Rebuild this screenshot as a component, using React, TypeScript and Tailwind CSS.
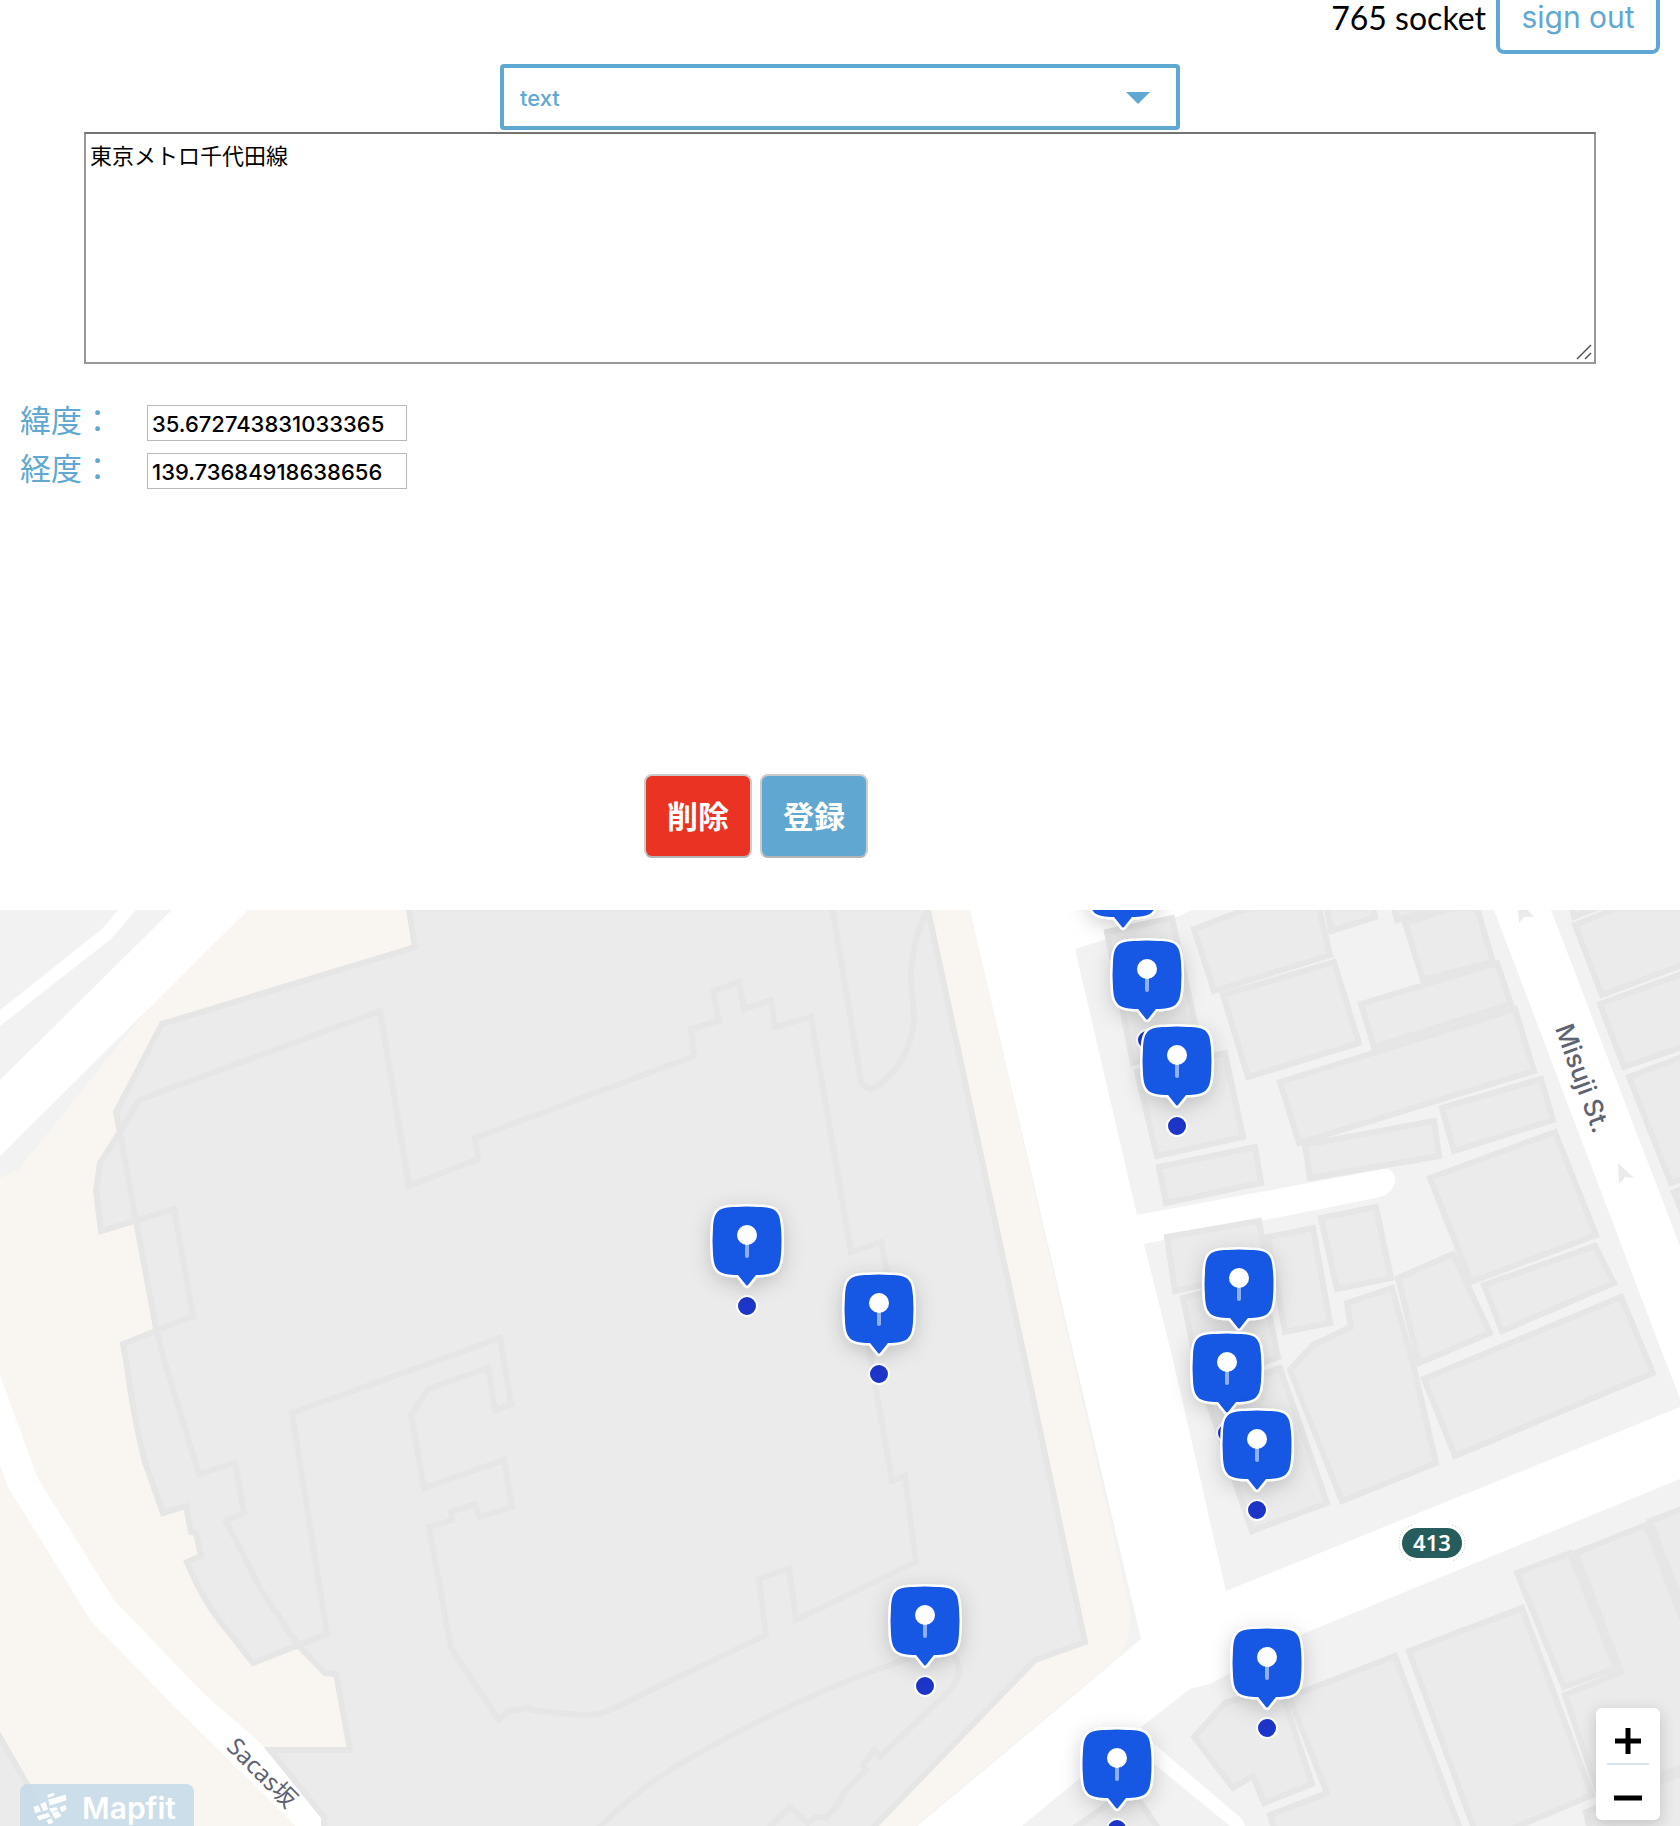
import { useState } from "react";

type Pin = { x: number; y: number; dot: boolean };

const PINS: Pin[] = [
  { x: 1123, y: 948, dot: false },
  { x: 1147, y: 1040, dot: true },
  { x: 1177, y: 1126, dot: true },
  { x: 747, y: 1306, dot: true },
  { x: 1239, y: 1349, dot: false },
  { x: 879, y: 1374, dot: true },
  { x: 1227, y: 1433, dot: true },
  { x: 1257, y: 1510, dot: true },
  { x: 925, y: 1686, dot: true },
  { x: 1267, y: 1728, dot: true },
  { x: 1117, y: 1829, dot: true },
];

const BUILDINGS: string[] = [
  "1107,932 1172,918 1199,1042 1133,1063",
  "1137,1072 1225,1053 1243,1137 1157,1156",
  "1159,1167 1255,1147 1261,1183 1166,1203",
  "1194,929 1250,908 1319,908 1330,955 1214,991",
  "1223,995 1334,962 1359,1043 1248,1077",
  "1326,904 1331,931 1375,917 1372,904",
  "1393,904 1397,920 1450,904",
  "1405,923 1454,908 1477,908 1493,962 1423,980",
  "1361,1004 1497,963 1511,1004 1374,1047",
  "1280,1082 1515,1009 1534,1071 1299,1143",
  "1442,1108 1541,1079 1553,1120 1454,1151",
  "1305,1145 1434,1121 1439,1156 1310,1178",
  "1430,1178 1555,1132 1596,1235 1471,1282",
  "1484,1285 1595,1246 1614,1283 1502,1331",
  "1321,1218 1376,1207 1391,1278 1337,1289",
  "1398,1278 1453,1254 1490,1333 1419,1363",
  "1167,1237 1259,1221 1268,1270 1175,1291",
  "1268,1237 1313,1228 1330,1323 1285,1332",
  "1183,1298 1262,1278 1278,1357 1201,1386",
  "1206,1396 1280,1368 1327,1503 1252,1531",
  "1347,1303 1392,1288 1412,1360 1436,1463 1342,1501 1290,1370 1313,1345 1351,1327",
  "1424,1379 1621,1297 1653,1373 1455,1456",
  "1571,904 1574,917 1606,904",
  "1575,925 1622,906 1690,904 1690,962 1602,995",
  "1600,1004 1690,971 1690,1044 1624,1067",
  "1629,1077 1690,1054 1690,1176 1671,1183",
  "1674,1192 1690,1186 1690,1232",
  "1517,1573 1570,1553 1616,1668 1564,1687",
  "1576,1553 1646,1525 1690,1640 1690,1764 1600,1798 1565,1695 1621,1672",
  "1650,1521 1690,1506 1690,1626",
  "1409,1651 1522,1608 1592,1795 1500,1834 1476,1834",
  "1289,1697 1395,1656 1462,1834 1276,1834 1270,1815 1327,1793",
  "1194,1737 1226,1702 1281,1690 1312,1784 1264,1803 1253,1776 1233,1788",
  "1586,1812 1690,1770 1690,1840 1592,1840",
  "1066,1834 1111,1802 1139,1800 1162,1834",
];

const TOWER_OUTLINES: string[] = [
  "M409 900 409 910 415 947 162 1024 116 1112 120 1133 136 1221 156 1328 164 1360 199 1474 235 1463 244 1513 226 1521 261 1590 298 1645 325 1673 336 1674 350 1750 270 1750 324 1817 324 1836 865 1836 1035 1660 1085 1642 1025 1360 928 910 926 900Z",
  "M380 1011 139 1100 120 1132 100 1163 96 1191 101 1231 174 1209 193 1316 123 1344 126 1360Q134 1420 145 1462L163 1513 186 1506 191 1532 196 1533 201 1556 187 1562Q202 1598 219 1620L253 1663 327 1634 292 1413 500 1338 511 1404 495 1410 488 1368 428 1389 411 1415 424 1488 504 1460 512 1507 480 1517 475 1504 451 1512 452 1520 429 1527 451 1648 499 1720 507 1712 528 1708 532 1710 560 1713Q594 1717 605 1712 620 1706 653 1689L766 1635 759 1579 789 1568 796 1620 916 1562 905 1476 892 1481 871 1360 866 1312 893 1300 881 1242 851 1252 811 1017 775 1027 771 1000 744 1009 739 982 713 991 719 1021 691 1029 694 1056 475 1138 478 1159 409 1186Z",
];

const TOWER_DETAILS: string[] = [
  "M831 900 861 1082Q868 1093 878 1086 912 1060 914 1017L911 983Q910 945 928 908",
  "M594 1832Q640 1786 692 1757 800 1695 912 1657",
  "M953 1655Q967 1672 948 1692L880 1757 875 1750 863 1765 866 1770 843 1793 841 1800 826 1818 816 1817 808 1823 790 1807 765 1832",
];

function Marker({ x, y, dot }: Pin) {
  return (
    <g transform={`translate(${x} ${y})`}>
      {dot && <circle r="10" fill="#1d35c9" stroke="#fff" strokeWidth="2" />}
      <path
        d="M-9-31C-28-31-33-35-34-52Q-35-65-34-78C-33-95-29-99-11-99Q0-100 11-99C29-99 33-95 34-78Q35-65 34-52C33-35 28-31 9-31L1-21Q0-20-1-21Z"
        fill="#1658e3"
        stroke="#fff"
        strokeWidth="5"
        strokeLinejoin="round"
        paintOrder="stroke"
        filter="url(#marker-shadow)"
      />
      <path d="M0-62V-50" stroke="#8fb0f3" strokeWidth="4" strokeLinecap="round" />
      <circle cy="-71" r="10" fill="#fff" />
    </g>
  );
}

function StreetMap() {
  return (
    <svg
      className="block h-full w-full"
      viewBox="0 910 1680 916"
      preserveAspectRatio="xMidYMid slice"
      role="img"
      aria-label="map"
    >
      <defs>
        <filter id="marker-shadow" x="-60%" y="-50%" width="220%" height="220%">
          <feDropShadow dx="0" dy="5" stdDeviation="10" floodColor="#000" floodOpacity="0.18" />
        </filter>
      </defs>
      <rect y="900" width="1680" height="940" fill="#f2f2f2" />
      <path
        d="M248 900 145 1012 18 1170 0 1178V1840H900L915 1826 1060 1705 1119 1657Q1134 1635 1129 1605L1073 1360 968 900Z"
        fill="#f9f6f1"
      />
      <g fill="#fff">
        <path d="M0 1010 102 929 118 910V900H144L136 910 111 939 0 1026Z" />
        <path d="M0 1080 172 910 182 900H258L248 910 0 1156Z" />
        <path d="M0 1375 37 1477 114 1600 202 1692 266 1748 286 1772 321 1817V1840H310L171 1703 91 1621 9 1489 0 1465Z" />
        <path d="M968 900 970 910 1075 1360 1141 1639 1060 1707 917 1826 900 1840H1004L1022 1826 1080 1778 1130 1742 1153 1763 1230 1826 1245 1840V1826L1242 1819 1153 1743 1141 1727 1190 1689 1210 1684 1305 1633 1680 1479V1407L1226 1591 1173 1360 1144 1244 1376 1198C1400 1194 1400 1168 1384 1169L1137 1215 1075 949 1177 917 1192 910V900Z" />
        <path d="M1490 900 1494 910 1665 1360 1690 1424V1275L1680 1246 1551 910 1547 900Z" />
      </g>
      <g fill="#ebebeb" stroke="#e6e6e6" strokeWidth="6">
        <path d="M-10 1720 32 1793 60 1840H-10Z" />
        {BUILDINGS.map((points) => (
          <polygon key={points} points={points} />
        ))}
      </g>
      <g fill="#ebebeb">
        {TOWER_OUTLINES.map((d) => (
          <path key={d} d={d} />
        ))}
      </g>
      <g fill="none" stroke="#e6e6e6" strokeWidth="6">
        {TOWER_OUTLINES.map((d) => (
          <path key={d} d={d} />
        ))}
        {TOWER_DETAILS.map((d) => (
          <path key={d} d={d} />
        ))}
      </g>
      <g fill="#ebebeb">
        <path d="M1618 1163 1634 1178 1625 1177 1619 1184Z" />
        <path d="M1518 908 1519 923 1524 917 1534 917 1526 908Z" />
      </g>
      <text
        transform="translate(1583 1078) rotate(70)"
        textAnchor="middle"
        dominantBaseline="central"
        fill="#5d6370"
        className="font-['Inter',sans-serif] text-[26px] font-medium"
      >
        Misuji St.
      </text>
      <text
        transform="translate(263 1772) rotate(45)"
        textAnchor="middle"
        dominantBaseline="central"
        fill="#5d6370"
        className="font-['Noto_Sans','Noto_Sans_CJK_JP',sans-serif] text-[24px]"
      >
        Sacas坂
      </text>
      <rect x="1402" y="1528" width="60" height="30" rx="15" fill="#265c5b" />
      <path
        d="M1412 1525Q1399 1530 1399 1543T1412 1561M1452 1525Q1465 1530 1465 1543T1452 1561"
        fill="none"
        stroke="#bbb"
        strokeDasharray="1 2"
      />
      <text
        x="1432"
        y="1551"
        textAnchor="middle"
        fill="#fff"
        className="font-['Noto_Sans',sans-serif] text-[22px] font-semibold"
      >
        413
      </text>
      {PINS.map((pin) => (
        <Marker key={`${pin.x}-${pin.y}`} {...pin} />
      ))}
    </svg>
  );
}

function MapfitLogo() {
  return (
    <svg
      className="size-9"
      viewBox="66 46 105 102"
      fill="#fff"
      stroke="#fff"
      strokeWidth="3"
      strokeLinejoin="round"
      aria-hidden="true"
    >
      <path d="M112 60 128 54 130 59 114 65Z" />
      <path d="M115 74 163 60 165 73 119 88Z" />
      <path d="M92 86 104 81 111 99 100 105Z" />
      <path d="M72 95 84 91 90 106 76 111Z" />
      <path d="M82 122 113 113 118 122 87 131Z" />
      <path d="M118 100 136 96 140 101 124 109Z" />
      <path d="M126 112 141 107 150 120 134 127Z" />
      <path d="M148 96 162 90 166 100 153 107Z" />
      <path d="M110 134 122 129 126 139 116 143Z" />
    </svg>
  );
}

function CoordinateField({ id, label, initial }: { id: string; label: string; initial: string }) {
  const [value, setValue] = useState(initial);
  return (
    <div className="flex h-12 items-center">
      <label htmlFor={id} className="w-[127px] pb-1.5 text-[31px] leading-none text-[#5fa8d1]">
        {label}
      </label>
      <input
        id={id}
        type="text"
        value={value}
        onChange={(e) => setValue(e.target.value)}
        className="h-9 w-[260px] border border-[#bbbbbb] bg-white px-1 pt-0.5 font-['Inter',sans-serif] text-[22px] font-medium text-black"
      />
    </div>
  );
}

export default function App() {
  const [content, setContent] = useState("東京メトロ千代田線");
  return (
    <div className="bg-white font-['Lato','Noto_Sans_CJK_JP',sans-serif] text-black">
      <header className="flex h-[54px] items-end justify-end gap-2.5 pr-5">
        <span className="pb-5 text-[32px] leading-8">765 socket</span>
        <button
          type="button"
          className="h-[74px] w-[164px] shrink-0 rounded-lg border-4 border-[#5fa8d1] font-['Inter',sans-serif] text-[30px] leading-8 text-[#5fa8d1]"
        >
          sign out
        </button>
      </header>

      <main>
        <div className="relative mx-auto mt-2.5 w-[680px] max-w-full">
          <select
            aria-label="type"
            className="h-[66px] w-full appearance-none rounded-sm border-4 border-[#5fa8d1] bg-white px-4 pt-0.5 font-['Inter',sans-serif] text-[22px] font-medium text-[#5fa8d1]"
          >
            <option>text</option>
          </select>
          <svg
            className="pointer-events-none absolute top-7 right-[30px] h-3 w-6"
            viewBox="0 0 24 12"
            fill="#5fa8d1"
            aria-hidden="true"
          >
            <path d="M0 0H24L12 12Z" />
          </svg>
        </div>

        <div className="relative mx-auto mt-0.5 w-[90%]">
          <textarea
            aria-label="content"
            value={content}
            onChange={(e) => setContent(e.target.value)}
            className="block h-[232px] w-full resize-none border-2 border-[#999999] border-t-[#737373] bg-white px-1 py-1.5 text-[22px] leading-8 text-black"
          />
          <svg
            className="pointer-events-none absolute right-1 bottom-1 size-4"
            viewBox="0 0 16 16"
            stroke="#555"
            strokeWidth="1.5"
            aria-hidden="true"
          >
            <path d="M1 15 15 1M9 15 15 9" />
          </svg>
        </div>

        <div className="mt-[35px] pl-5">
          <CoordinateField id="latitude" label="緯度：" initial="35.672743831033365" />
          <CoordinateField id="longitude" label="経度：" initial="139.73684918638656" />
        </div>

        <div className="mt-[279px] flex w-[90%] justify-center gap-2">
          <button
            type="button"
            className="h-[84px] w-[108px] rounded-lg border-2 border-[#cccccc] border-b-[#b3b3b3] bg-[#eb3323] text-[31px] font-bold text-white"
          >
            削除
          </button>
          <button
            type="button"
            className="h-[84px] w-[108px] rounded-lg border-2 border-[#cccccc] border-b-[#b3b3b3] bg-[#60a8d1] text-[31px] font-bold text-white"
          >
            登録
          </button>
        </div>

        <section className="relative mt-[52px] h-[916px] overflow-hidden">
          <StreetMap />
          <a
            href="#mapfit"
            className="absolute top-[874px] left-5 flex h-[52px] w-[174px] items-start gap-3.5 rounded-lg bg-[#c4d9e7]/85 pt-1.5 pl-3 font-['Inter',sans-serif] text-[30px] leading-9 font-semibold text-white"
          >
            <MapfitLogo />
            Mapfit
          </a>
          <div className="absolute right-5 bottom-1.5 flex h-28 w-16 flex-col items-center rounded-md bg-white shadow-[0_4px_16px_rgba(0,0,0,0.18)]">
            <button type="button" aria-label="zoom in" className="flex flex-1 items-center pt-2.5">
              <svg className="size-7" viewBox="0 0 28 28" stroke="#000" strokeWidth="5" aria-hidden="true">
                <path d="M14 1V27M1 14H27" />
              </svg>
            </button>
            <div className="h-0.5 w-[42px] bg-[#d8e5ef]" />
            <button type="button" aria-label="zoom out" className="flex flex-1 items-center pt-2.5">
              <svg className="size-7" viewBox="0 0 28 28" stroke="#000" strokeWidth="5" aria-hidden="true">
                <path d="M0 14H28" />
              </svg>
            </button>
          </div>
        </section>
      </main>
    </div>
  );
}
